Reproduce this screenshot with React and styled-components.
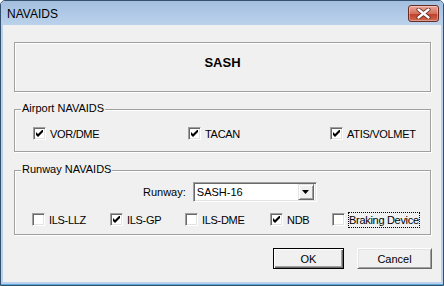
import React from "react";
import styled, { createGlobalStyle } from "styled-components";

const GlobalStyle = createGlobalStyle`
  html, body { margin: 0; padding: 0; background: #ffffff; }
  * { box-sizing: border-box; }
`;

const FONT = `"Liberation Sans", Arial, sans-serif`;

const Window = styled.div`
  width: 444px;
  height: 286px;
  border: 1px solid #34506f;
  border-radius: 5px 5px 0 0;
  background: #b9d1ea;
  display: flex;
  flex-direction: column;
  font-family: ${FONT};
  overflow: hidden;
`;

const TitleBar = styled.div`
  height: 24px;
  flex: none;
  display: flex;
  align-items: center;
  justify-content: space-between;
  padding: 0 4px 0 6px;
  background: linear-gradient(#a3bfdf, #b4cce8 70%, #b9d1ea);
`;

const Title = styled.span`
  font-size: 12px;
  line-height: 14px;
  padding-top: 2px;
  color: #000;
`;

const CloseButton = styled.div`
  width: 31px;
  height: 17px;
  border: 1px solid #6b2a22;
  border-radius: 3px;
  background: linear-gradient(#e8a89a, #d4705c 50%, #c0402b 55%, #cd6a4d);
  box-shadow: inset 0 0 0 1px rgba(255, 255, 255, 0.35);
  display: flex;
  align-items: center;
  justify-content: center;
`;

const Frame = styled.div`
  flex: 1;
  display: flex;
  padding: 0 2px 2px 2px;
  background: #b9d1ea;
  border-bottom: 1px solid #5aa6d8;
`;

const Content = styled.div`
  flex: 1;
  background: #f0f0f0;
  display: flex;
  flex-direction: column;
  padding: 17px 10px 0 11px;
`;

const etched = `
  border: 1px solid #a0a0a0;
  box-shadow: inset 1px 1px 0 #ffffff, 1px 1px 0 #ffffff;
`;

const HeaderBox = styled.div`
  ${etched}
  height: 50px;
  padding-top: 12px;
  text-align: center;
  font-size: 13px;
  line-height: 15px;
  font-weight: bold;
  color: #000;
`;

const Group = styled.div`
  ${etched}
  position: relative;
  margin-top: ${(p) => p.$gap}px;
  padding: ${(p) => p.$pad};
  display: flex;
  flex-direction: column;
`;

const Legend = styled.span`
  position: absolute;
  top: -8px;
  left: 6px;
  padding: 0 1px;
  background: #f0f0f0;
  font-size: 11px;
  line-height: 13px;
  color: #000;
`;

const CheckGrid = styled.div`
  display: grid;
  grid-template-columns: ${(p) => p.$cols};
  padding-left: ${(p) => p.$left}px;
`;

const CheckItem = styled.div`
  display: flex;
  align-items: center;
  gap: 3px;
  height: 13px;
`;

const Box = styled.div`
  width: 13px;
  height: 13px;
  flex: none;
  background: #ffffff;
  border: 1px solid;
  border-color: #a0a0a0 #ffffff #ffffff #a0a0a0;
  box-shadow: inset 1px 1px 0 #696969, inset -1px -1px 0 #e3e3e3;
  display: flex;
  align-items: center;
  justify-content: center;
`;

const Label = styled.span`
  font-size: 11px;
  line-height: 14px;
  letter-spacing: -0.3px;
  white-space: nowrap;
  color: #000;
  padding: ${(p) => (p.$focused ? "0" : "1px")};
  border: ${(p) => (p.$focused ? "1px dotted #000" : "none")};
`;

const RunwayRow = styled.div`
  display: flex;
  align-items: center;
  gap: 7px;
  padding-left: 128px;
  margin-bottom: 11px;
`;

const FieldLabel = styled.span`
  font-size: 11px;
  line-height: 13px;
  color: #000;
`;

const Combo = styled.div`
  width: 124px;
  height: 20px;
  border: 1px solid;
  border-color: #a0a0a0 #ffffff #ffffff #a0a0a0;
  box-shadow: inset 1px 1px 0 #696969, inset -1px -1px 0 #e3e3e3;
  background: #ffffff;
  display: flex;
  align-items: center;
  padding: 2px 2px 2px 3px;
`;

const ComboText = styled.span`
  flex: 1;
  font-size: 11px;
  line-height: 14px;
  color: #000;
`;

const ComboButton = styled.div`
  width: 16px;
  height: 16px;
  background: #f0f0f0;
  border: 1px solid;
  border-color: #e3e3e3 #696969 #696969 #e3e3e3;
  box-shadow: inset 1px 1px 0 #ffffff, inset -1px -1px 0 #a0a0a0;
  display: flex;
  align-items: center;
  justify-content: center;
`;

const ButtonRow = styled.div`
  display: flex;
  justify-content: flex-end;
  gap: 13px;
  margin-top: 13px;
  margin-right: -1px;
`;

const Button = styled.div`
  width: ${(p) => p.$w}px;
  height: 21px;
  display: flex;
  align-items: center;
  justify-content: center;
  font-size: 11px;
  line-height: 13px;
  padding-top: 1px;
  color: #000;
  background: #f0f0f0;
  border: 1px solid;
  border-color: ${(p) =>
    p.$default ? "#000" : "#ffffff #696969 #696969 #ffffff"};
  box-shadow: ${(p) =>
    p.$default
      ? "inset 1px 1px 0 #ffffff, inset -1px -1px 0 #696969, inset -2px -2px 0 #a0a0a0"
      : "inset 1px 1px 0 #e3e3e3, inset -1px -1px 0 #a0a0a0"};
`;

const Check = () => (
  <svg width="7" height="7" viewBox="0 0 7 7">
    <polygon points="0,2 2,4 6,0 7,0 7,2 2,7 0,5" fill="#000" />
  </svg>
);

const Checkbox = ({ checked, label, focused }) => (
  <CheckItem>
    <Box>{checked && <Check />}</Box>
    <Label $focused={focused}>{label}</Label>
  </CheckItem>
);

export default function App() {
  return (
    <>
      <GlobalStyle />
      <Window>
        <TitleBar>
          <Title>NAVAIDS</Title>
          <CloseButton>
            <svg width="15" height="11" viewBox="0 0 15 11">
              <path
                d="M2.5 1.5 L12.5 9.5 M12.5 1.5 L2.5 9.5"
                stroke="#5a231a"
                strokeWidth="4"
                strokeLinecap="round"
              />
              <path
                d="M2.5 1.5 L12.5 9.5 M12.5 1.5 L2.5 9.5"
                stroke="#ffffff"
                strokeWidth="2.4"
                strokeLinecap="round"
              />
            </svg>
          </CloseButton>
        </TitleBar>
        <Frame>
          <Content>
            <HeaderBox>SASH</HeaderBox>
            <Group $gap={17} $pad="17px 0 11px 0">
              <Legend>Airport NAVAIDS</Legend>
              <CheckGrid $cols="155px 142px auto" $left={18}>
                <Checkbox checked label="VOR/DME" />
                <Checkbox checked label="TACAN" />
                <Checkbox checked label="ATIS/VOLMET" />
              </CheckGrid>
            </Group>
            <Group $gap={18} $pad="11px 0 8px 0">
              <Legend>Runway NAVAIDS</Legend>
              <RunwayRow>
                <FieldLabel>Runway:</FieldLabel>
                <Combo>
                  <ComboText>SASH-16</ComboText>
                  <ComboButton>
                    <svg width="7" height="4" viewBox="0 0 7 4">
                      <polygon points="0,0 7,0 3.5,4" fill="#000" />
                    </svg>
                  </ComboButton>
                </Combo>
              </RunwayRow>
              <CheckGrid $cols="78px 75px 85px 62px auto" $left={17}>
                <Checkbox label="ILS-LLZ" />
                <Checkbox checked label="ILS-GP" />
                <Checkbox label="ILS-DME" />
                <Checkbox checked label="NDB" />
                <Checkbox label="Braking Device" focused />
              </CheckGrid>
            </Group>
            <ButtonRow>
              <Button $w={71} $default>OK</Button>
              <Button $w={75}>Cancel</Button>
            </ButtonRow>
          </Content>
        </Frame>
      </Window>
    </>
  );
}
